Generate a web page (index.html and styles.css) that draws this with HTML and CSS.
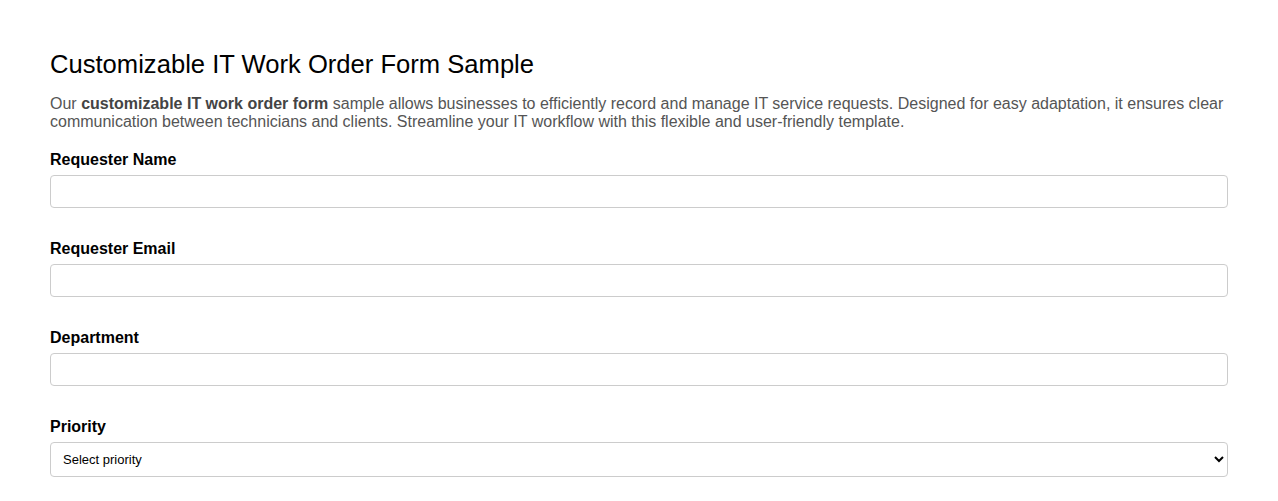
FILE: index.html
```html
<!DOCTYPE html>
<html lang="en">
<head>
<meta charset="utf-8">
<title>Customizable IT Work Order Form Sample</title>
<link rel="stylesheet" href="styles.css">
</head>
<body>
<div class="page">
  <h1 class="title">Customizable IT Work Order Form Sample</h1>
  <p class="intro">Our <strong>customizable IT work order form</strong> sample allows businesses to efficiently record and manage IT service requests. Designed for easy adaptation, it ensures clear communication between technicians and clients. Streamline your IT workflow with this flexible and user-friendly template.</p>
  <form class="form">
    <div class="field">
      <label class="label" for="name">Requester Name</label>
      <input class="input" id="name" type="text">
    </div>
    <div class="field">
      <label class="label" for="email">Requester Email</label>
      <input class="input" id="email" type="email">
    </div>
    <div class="field">
      <label class="label" for="dept">Department</label>
      <input class="input" id="dept" type="text">
    </div>
    <div class="field">
      <label class="label" for="priority">Priority</label>
      <select class="select" id="priority">
        <option>Select priority</option>
        <option>Low</option>
        <option>Medium</option>
        <option>High</option>
      </select>
    </div>
  </form>
</div>
</body>
</html>
```

FILE: styles.css
```css
html, body {
  margin: 0;
  padding: 0;
  background: #ffffff;
}

body {
  font-family: "Liberation Sans", Arial, sans-serif;
  color: #000;
}

.page {
  padding: 49px 50px 40px 50px;
}

.title {
  margin: 0;
  font-size: 25.6px;
  font-weight: normal;
  line-height: 30px;
  color: #000;
}

.intro {
  margin: 16px 0 0 0;
  font-size: 16px;
  line-height: 18px;
  color: #555;
}

.intro strong {
  font-weight: bold;
  color: #444;
}

.form {
  display: flex;
  flex-direction: column;
  gap: 32px;
  margin-top: 20px;
}

.field {
  display: flex;
  flex-direction: column;
  gap: 6px;
}

.label {
  font-size: 16px;
  font-weight: bold;
  line-height: 18px;
  color: #000;
}

.input {
  box-sizing: border-box;
  width: 100%;
  height: 33px;
  margin: 0;
  padding: 8px;
  border: 1px solid #ccc;
  border-radius: 4px;
  font-family: inherit;
  font-size: 14px;
  background: #fff;
}

.select {
  box-sizing: border-box;
  width: 100%;
  height: 35px;
  margin: 0;
  padding: 0 4px 0 8px;
  border: 1px solid #ccc;
  border-radius: 4px;
  font-family: "Liberation Sans", Arial, sans-serif;
  font-size: 13px;
  color: #000;
  background: #fff;
}
```
